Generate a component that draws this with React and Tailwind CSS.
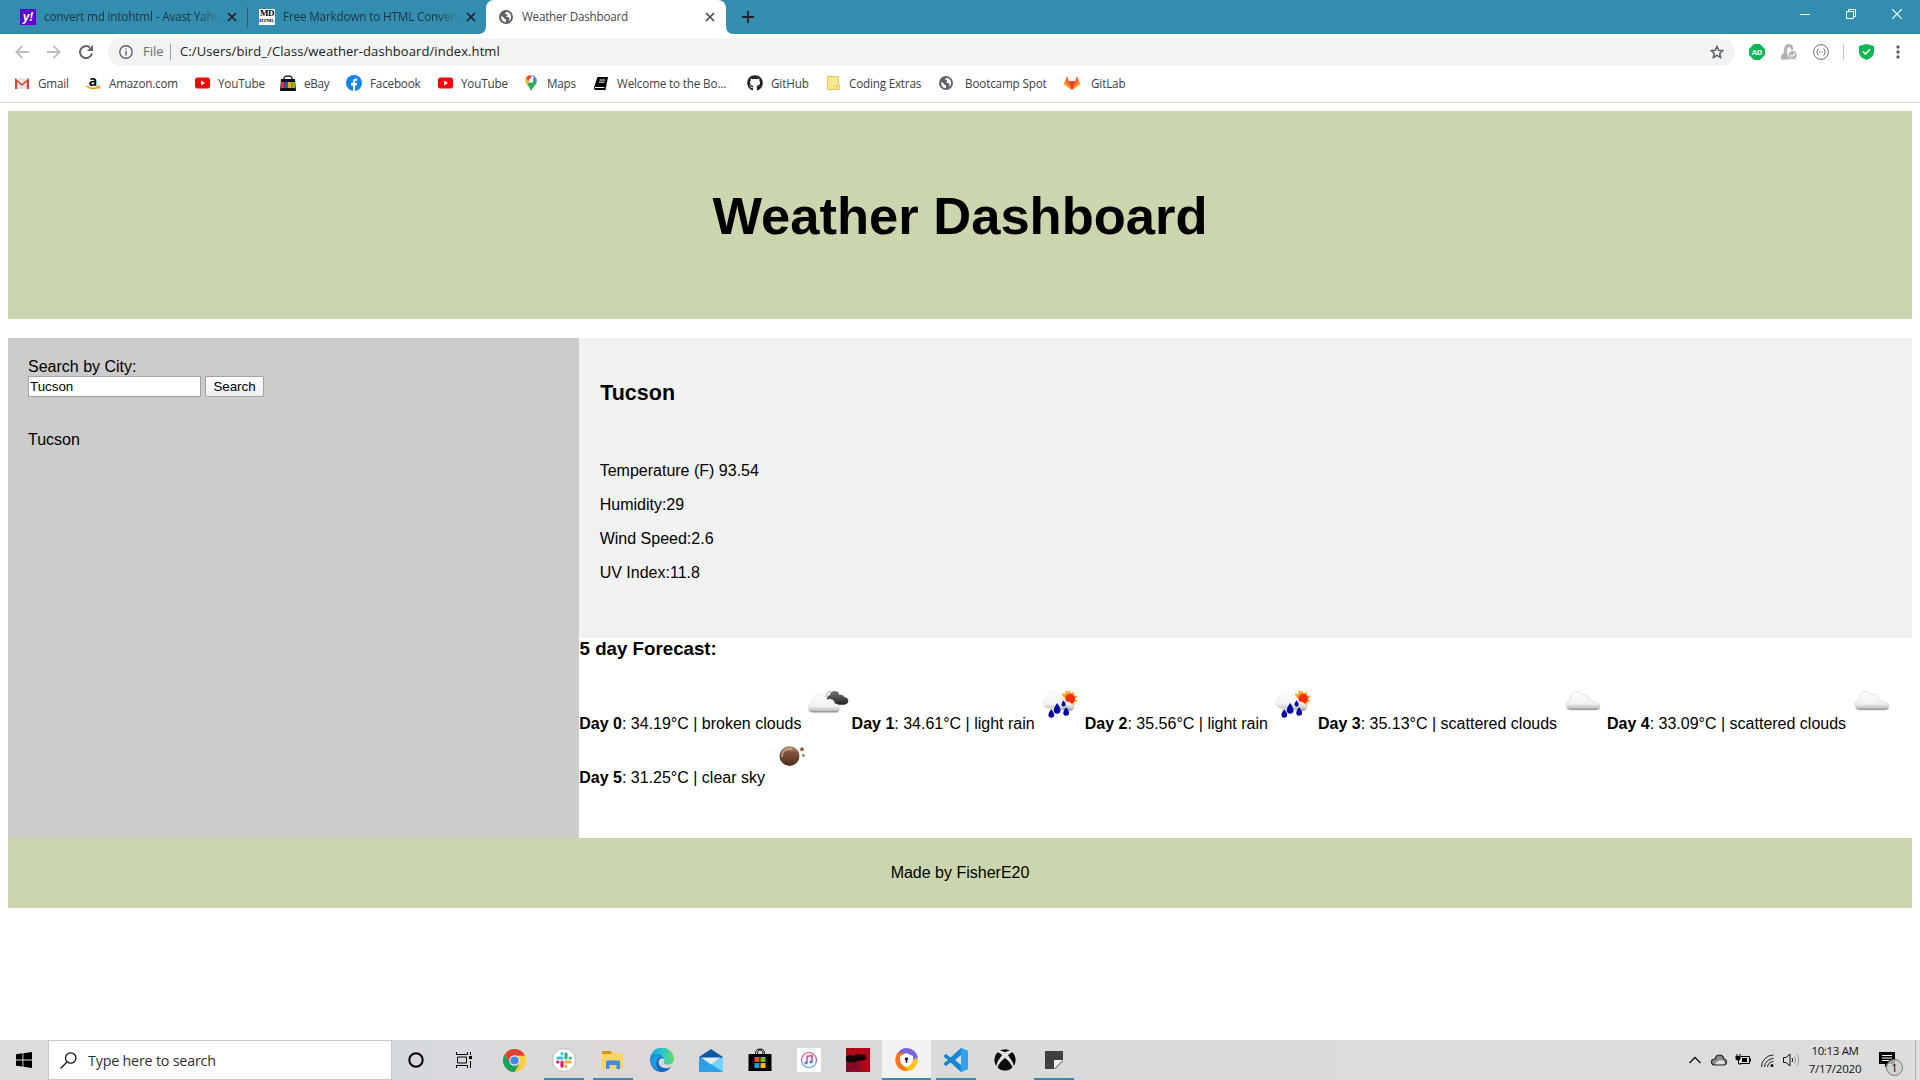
import React from "react";
import { FaGithub, FaXbox } from "react-icons/fa";

const UI = "font-['Open_Sans','Segoe_UI',sans-serif]";

function Globe({ size = 14 }) {
  return (
    <svg width={size} height={size} viewBox="0 0 24 24" fill="#5f6368">
      <circle cx="12" cy="12" r="12" />
      <path d="M4 10c2 2 4 2 5 4s2 2 3 2v5C7 21 3 17 4 10zM13 3c-1 2-3 2-3 4 1 1 4 0 4 2s-2 2-1 3 4 0 5 2-2 4-1 5c3-2 5-6 3-11-2-3-4-5-8-5z" fill="#fff" />
    </svg>
  );
}

function CloseX({ color = "#202124" }) {
  return (
    <svg width="10" height="10" viewBox="0 0 10 10" stroke={color} strokeWidth="1.7">
      <path d="M1 1l8 8M9 1l-8 8" />
    </svg>
  );
}

function TabStrip() {
  return (
    <div className="flex h-[34px] bg-[#338dae] text-[11.7px] text-[#1b3540]">
      <div className="flex w-[248px] items-center pl-5 pb-px">
        <div className="flex h-4 w-4 shrink-0 items-center justify-center bg-[#5f01d1] font-['Liberation_Sans'] text-[12px] leading-none font-bold text-white italic">y!</div>
        <div className="ml-2 w-[176px] overflow-hidden whitespace-nowrap tracking-[-0.15px] [mask-image:linear-gradient(90deg,#000_88%,transparent)]">convert md intohtml - Avast Yahoo</div>
        <div className="ml-[7px]"><CloseX /></div>
        <div className="ml-[10px] h-5 w-px shrink-0 bg-[#235f77]" />
      </div>
      <div className="flex w-[238px] items-center pl-[11px] pb-px">
        <div className="flex h-4 w-4 shrink-0 flex-col items-center bg-white font-['Liberation_Serif'] font-bold text-black">
          <span className="text-[9px] leading-[9px] tracking-[-0.5px]">MD</span>
          <span className="text-[5px] leading-[6px]">HTML</span>
        </div>
        <div className="ml-2 w-[176px] overflow-hidden whitespace-nowrap tracking-[-0.15px] [mask-image:linear-gradient(90deg,#000_88%,transparent)]">Free Markdown to HTML Converter</div>
        <div className="ml-[7px]"><CloseX /></div>
      </div>
      <div className="relative flex w-[240px] items-center rounded-t-lg bg-white pb-px pl-[13px] text-[#45494d]">
        <svg className="absolute bottom-0 -left-2" width="8" height="8"><path d="M8 0v8H0Q8 8 8 0z" fill="#fff" /></svg>
        <svg className="absolute -right-2 bottom-0" width="8" height="8"><path d="M0 0v8h8Q0 8 0 0z" fill="#fff" /></svg>
        <Globe />
        <div className="ml-[9px] w-[183px] whitespace-nowrap tracking-[-0.23px]">Weather Dashboard</div>
        <CloseX color="#45494d" />
      </div>
      <div className="flex flex-1 items-center pl-4">
        <svg width="12" height="12" viewBox="0 0 12 12" stroke="#202124" strokeWidth="1.8"><path d="M6 0v12M0 6h12" /></svg>
      </div>
      <div className="flex h-7 items-center gap-9 pr-[18px]">
        <svg width="10" height="10" stroke="#fff"><path d="M0 5.5h10" /></svg>
        <svg width="10" height="10" stroke="#fff" fill="none"><path d="M.5 2.5h7v7h-7zM2.5 2.5v-2h7v7h-2" /></svg>
        <svg width="10" height="10" stroke="#fff" strokeWidth="1.2"><path d="M0 0l10 10M10 0L0 10" /></svg>
      </div>
    </div>
  );
}

function Toolbar() {
  return (
    <div className="flex h-9 items-center bg-white pl-[15px]">
      <svg width="14" height="14" viewBox="0 0 14 14" fill="none" stroke="#babcbe" strokeWidth="1.8"><path d="M14 7H1.5M7.5 .8L1.3 7l6.2 6.2" /></svg>
      <svg className="ml-[18px]" width="14" height="14" viewBox="0 0 14 14" fill="none" stroke="#babcbe" strokeWidth="1.8"><path d="M0 7h12.500M6.500 .8L12.700 7l-6.200 6.200" /></svg>
      <svg className="ml-[18px]" width="14" height="14" viewBox="0 0 14 14" fill="none" stroke="#5f6368" strokeWidth="2"><path d="M12.900 8.500A6 6 0 1 1 11 2.600" /><path d="M14 0v6H8z" fill="#5f6368" stroke="none" /></svg>
      <div className="ml-[15px] flex h-7 w-[1627px] items-center rounded-full bg-[#f1f3f4] pl-[11px] pr-[11px] text-[13px]">
        <svg width="14" height="14" viewBox="0 0 14 14" fill="none" stroke="#5f6368" strokeWidth="1.400"><circle cx="7" cy="7" r="6.200" /><path d="M7 6v4.500M7 3.400v1.400" /></svg>
        <span className="ml-[10px] w-[27px] text-[#6b6f73]">File</span>
        <span className="h-4 w-px bg-[#9aa0a6]" />
        <span className="ml-[9px] flex-1 whitespace-nowrap text-[#202124] tracking-[0.09px]">C:/Users/bird_/Class/weather-dashboard/index.html</span>
        <svg width="14" height="14" viewBox="0 0 24 24" fill="none" stroke="#5f6368" strokeWidth="2.600"><path d="M12 2.500l2.900 6.500 7 .7-5.300 4.700 1.600 7L12 17.700 5.800 21.400l1.600-7L2.100 9.700l7-.7z" /></svg>
      </div>
      <svg className="ml-[14px]" width="16" height="16" viewBox="0 0 16 16"><path d="M5 0h6l5 5v6l-5 5H5l-5-5V5z" fill="#12b755" /><text x="8" y="10.700" fontSize="7.500" fontWeight="700" fill="#fff" textAnchor="middle" fontFamily="Open Sans">AD</text></svg>
      <svg className="ml-4" width="17" height="16" viewBox="0 0 17 16"><path d="M0 15.500v-3.500q0-1.500 2.500-2.500L3 5q1-5 5-5 3.500 0 4 4l.5 3 3 8.500z" fill="#b2b2b2" /><path d="M5.800 9.500l.3-4q.4-2.500 2-2.500t2 2.500v2.500l-1.500 2z" fill="#fff" /><circle cx="11.700" cy="11" r="4.500" fill="#b2b2b2" stroke="#fff" /><path d="M9.600 11l1.500 1.500 3-3" fill="none" stroke="#fff" strokeWidth="1.200" /></svg>
      <svg className="ml-[15px]" width="16" height="16" viewBox="0 0 16 16" fill="none" stroke="#6c6c6c"><circle cx="8" cy="8" r="7.400" /><path d="M5.700 4.800q-1.300 0-1.200 1.500 0 1.500-1 1.700 1 .2 1 1.700-.1 1.500 1.200 1.500M10.300 4.800q1.300 0 1.200 1.500 0 1.500 1 1.700-1 .2-1 1.700.1 1.500-1.200 1.500M6 8h1M7.500 8h1M9 8h1" /></svg>
      <span className="ml-[14px] h-4 w-px bg-[#c4c6c8]" />
      <svg className="ml-[15px]" width="15" height="16" viewBox="0 0 15 16"><path d="M7.500 0L15 2v6q0 5.500-7.500 8Q0 13.500 0 8V2z" fill="#12b755" /><path d="M4 7.500L6.500 10l4.500-4.700" fill="none" stroke="#fff" strokeWidth="1.500" /></svg>
      <svg className="ml-[22px]" width="4" height="14" fill="#5f6368"><circle cx="2" cy="2" r="1.700" /><circle cx="2" cy="7" r="1.700" /><circle cx="2" cy="12" r="1.700" /></svg>
    </div>
  );
}

const YouTube = () => (
  <svg width="15" height="12" viewBox="0 0 15 12"><rect width="15" height="11" y=".500" rx="2.800" fill="#f00" /><path d="M6 3.600v4.800L10 6z" fill="#fff" /></svg>
);

const bookmarks = [
  { t: "Gmail", w: "w-[71px]", iw: "w-[23px]", ls: "tracking-[-0.2px]", i: <svg width="14" height="12" viewBox="0 0 14 12"><path d="M0 1h14v11H0z" fill="#e8e6e4" /><path d="M0 12V1l7 6 7-6v11h-2.200V4.800L7 9 2.200 4.800V12z" fill="#d94235" /></svg> },
  { t: "Amazon.com", w: "w-[109px]", iw: "w-[23px]", ls: "tracking-[-0.2px]", i: <svg className="overflow-visible" width="15" height="15" viewBox="0 0 15 15"><text x="7" y="9.500" textAnchor="middle" fontSize="14" fontWeight="700" fontFamily="Open Sans">a</text><path d="M.5 10q6 4.500 12 1" fill="none" stroke="#f90" strokeWidth="1.500" /><path d="M11 10h3l-1 3" fill="none" stroke="#f90" /></svg> },
  { t: "YouTube", w: "w-[85px]", iw: "w-[23px]", ls: "tracking-[-0.17px]", i: <YouTube /> },
  { t: "eBay", w: "w-[66px]", iw: "w-[24px]", ls: "tracking-[-0.3px]", i: <svg width="16" height="16" viewBox="0 0 16 16"><path d="M4 5V3q0-2 4-2t4 2v2" fill="none" stroke="#222" strokeWidth="1.300" /><path d="M1 4h14l1 12H0z" fill="#111" /><path d="M1 7h3.500v6H1z" fill="#e5323e" /><path d="M4.500 7H8v6H4.500z" fill="#0063d1" /><path d="M8 7h3.500v6H8z" fill="#f4ae01" /><path d="M11.500 7H15v6h-3.500z" fill="#85b716" /></svg> },
  { t: "Facebook", w: "w-[92px]", iw: "w-[24px]", ls: "tracking-[-0.2px]", i: <svg width="16" height="16" viewBox="0 0 16 16"><circle cx="8" cy="8" r="8" fill="#1185f7" /><path d="M7 16v-5.500H5V8h2V6.300Q7 3.500 9.700 3.500h1.500v2.200H10q-1 0-1 1.100V8h2.200l-.4 2.500H9V16z" fill="#fff" /></svg> },
  { t: "YouTube", w: "w-[87px]", iw: "w-[23px]", ls: "tracking-[-0.17px]", i: <YouTube /> },
  { t: "Maps", w: "w-[69px]", iw: "w-[22px]", ls: "tracking-[-0.2px]", i: <svg width="12" height="16" viewBox="0 0 12 16"><path d="M6 16Q5.300 12 2 9.500L9 3l3 3q0 2-2 4.500Q7 13.500 6 16z" fill="#34a853" /><path d="M.8 8Q-.5 5 1 2.500L5 6 2 9.500z" fill="#fbbc04" /><path d="M1 2.500Q3 0 6 0L6.500 4 4 7z" fill="#ea4335" /><path d="M6 0q4.500 0 6 5.500L7 7l2-4.500z" fill="#4285f4" /><circle cx="6" cy="5.500" r="2.200" fill="#fff" /></svg> },
  { t: "Welcome to the Bo...", w: "w-[153px]", iw: "w-[23px]", ls: "tracking-[-0.16px]", i: <svg width="14" height="13" viewBox="0 0 14 13"><path d="M3.500 0H14l-2.500 13H1Q-.5 12 .5 9z" fill="#000" /><path d="M5.500 3h5.500M5 5.200h5.500M1 10.500h9.500" stroke="#fff" /></svg> },
  { t: "GitHub", w: "w-[80px]", iw: "w-[24px]", ls: "tracking-[-0.15px]", i: <FaGithub size={16} color="#1f2328" /> },
  { t: "Coding Extras", w: "w-[112px]", iw: "w-[22px]", ls: "tracking-[-0.2px]", i: <svg width="13" height="14" viewBox="0 0 13 14"><path d="M.5 .5h11v8l1 1v4H.5z" fill="#ffe694" stroke="#ebc850" /><path d="M9.500 13.500v-4h3" fill="none" stroke="#ebc850" /></svg> },
  { t: "Bootcamp Spot", w: "w-[125px]", iw: "w-[26px]", ls: "tracking-[-0.16px]", i: <Globe /> },
  { t: "GitLab", w: "w-[80px]", iw: "w-[27px]", ls: "tracking-[-0.15px]", i: <svg width="16" height="14" viewBox="0 0 16 14"><path d="M8 14L0 8.200 2.800 0l2.400 5.200h5.600L13.200 0 16 8.200z" fill="#fc6d26" /><path d="M5.200 5.200h5.600L8 14z" fill="#e24329" /><path d="M0 8.200L1 5.200 8 14zM16 8.200l-1-3L8 14z" fill="#fca326" /></svg> },
];

function Bookmarks() {
  return (
    <div className="flex h-[33px] items-center border-b border-[#d5d7d9] bg-white pb-[5px] pl-[15px] text-[11.7px] text-[#3c4043]">
      {bookmarks.map((b, n) => (
        <div key={n} className={`flex shrink-0 items-center ${b.w}`}>
          <span className={`flex shrink-0 items-center ${b.iw}`}>{b.i}</span>
          <span className={`whitespace-nowrap ${b.ls}`}>{b.t}</span>
        </div>
      ))}
    </div>
  );
}

function Defs() {
  return (
    <svg className="absolute h-0 w-0">
      <defs>
        <linearGradient id="cl" x1="0" y1="0" x2="0" y2="1"><stop offset="0" stopColor="#fff" /><stop offset=".65" stopColor="#f2f2f2" /><stop offset=".88" stopColor="#c4c4c4" /><stop offset="1" stopColor="#777" /></linearGradient>
        <linearGradient id="dk" x1="0" y1="0" x2="0" y2="1"><stop offset="0" stopColor="#777" /><stop offset="1" stopColor="#222" /></linearGradient>
        <linearGradient id="mo" x1="0" y1="0" x2="0" y2="1"><stop offset="0" stopColor="#c49a80" /><stop offset=".35" stopColor="#7b5037" /><stop offset="1" stopColor="#4a2e1e" /></linearGradient>
        <linearGradient id="ed" x1="0" y1="0" x2="1" y2="0"><stop offset="0" stopColor="#1b9de2" /><stop offset=".5" stopColor="#2cc3d5" /><stop offset="1" stopColor="#5fe05a" /></linearGradient>
        <linearGradient id="it" x1="0" y1="0" x2="0" y2="1"><stop offset="0" stopColor="#fb4c6c" /><stop offset=".5" stopColor="#b659d8" /><stop offset="1" stopColor="#3da9f5" /></linearGradient>
      </defs>
    </svg>
  );
}

const Broken = () => (
  <g transform="translate(.3 .3) scale(.98)">
    <path d="M25 21q0-4 3-5 1-4 5-4 4 0 5 4 3-1 5 2 4 1 4 4t-4 4H32q-3-4-7-5z" fill="url(#dk)" />
    <path d="M24 18q1-5 5-6" fill="none" stroke="#999" />
    <path d="M11 34q-5 0-5-5 0-4 4-5 0-8 7-9 6 0 8 6 3-2 6 0 2 1 2 4 5 0 5 5 0 4-4 4z" fill="url(#cl)" stroke="#ddd" strokeWidth=".5" />
  </g>
);
const Rain = () => (
  <g transform="translate(.3 .8) scale(.97)">
    <path d="M35 10.500l1.500 4 3.500-2.500-.5 4.500 4.500.2-3.500 3 3.500 2.500-4.500 1 1 4-4-2-6-6-4-5 4.500.5.500-4.500 2.500 3z" fill="#ffa31a" />
    <circle cx="36" cy="19.500" r="5" fill="#fb2c10" />
    <path d="M12 29q-4-1-4-5 0-4 3-5 1-6 7-7 5 0 7 5 4 1 4 5l1 1q6-1 7 2 4 1 3 4-1 3-5 3z" fill="url(#cl)" stroke="#ddd" strokeWidth=".5" />
    <path d="M22.500 24q-3.500 5-3.500 7.500a3.500 3.500 0 0 0 7 0q0-2.500-3.500-7.500zM29 21q-2 3-2 4.500a2.200 2.200 0 0 0 4.400 0q0-1.500-2.400-4.500zM16.500 30q-3 4-3 6a3 3 0 0 0 6 0q0-2-3-6zM31.800 28q-3 4-3 6a3 3 0 0 0 6 0q0-2-3-6z" fill="#0808a0" />
  </g>
);
const Scattered = () => (
  <path transform="translate(0 .6)" d="M14 30.500q-5 0-5-5 0-4 4-5 0-7 6-8.500 5 0 7 3 5-1 6 3 1 4 5 4 6 1 6 5 0 3.500-4 3.500z" fill="url(#cl)" stroke="#d0d0d0" strokeWidth=".6" />
);
const Moon = () => (
  <>
    <circle cx="24.500" cy="23" r="10" fill="url(#mo)" />
    <path d="M17 24q0-9 10-8" fill="none" stroke="#dcc4b4" strokeWidth="1.500" opacity=".7" />
    <path d="M37 13.500l.8 1.700 1.900.2-1.400 1.300.4 1.800-1.700-1-1.700 1 .4-1.800-1.400-1.300 1.900-.2zM38.500 20.500l.5 1.200h1.300l-1 1 .3 1.300-1.100-.7-1.200.7.300-1.300-1-1H38z" fill="#7a5038" />
  </>
);

const days = [
  ["Day 0", ": 34.19°C | broken clouds", Broken, "w-[272.400px]"],
  ["Day 1", ": 34.61°C | light rain", Rain, "w-[233.200px]"],
  ["Day 2", ": 35.56°C | light rain", Rain, "w-[233.200px]"],
  ["Day 3", ": 35.13°C | scattered clouds", Scattered, "w-[289px]"],
  ["Day 4", ": 33.09°C | scattered clouds", Scattered, "w-[289px]"],
  ["Day 5", ": 31.25°C | clear sky", Moon, "w-[236px]"],
];

function Page() {
  return (
    <div className="h-[937px] bg-white px-2 pt-2 font-['Liberation_Sans',Arial,sans-serif] text-[16px] leading-[18px] text-black">
      <header className="flex h-[208px] items-center justify-center bg-[#ccd6ae] pt-px">
        <h1 className="text-[52.5px] leading-[60px] font-bold">Weather Dashboard</h1>
      </header>
      <div className="mt-[19px] flex h-[500px]">
        <aside className="w-[571.200px] bg-[#ccc] px-5 pt-5">
          <p>Search by City:</p>
          <div className="flex items-center gap-1">
            <input className="h-[21px] w-[173px] border border-[#a3a3a3] bg-white px-px text-[13.333px]" defaultValue="Tucson" />
            <button className="h-[21px] w-[59px] rounded-[2px] border border-[#a3a3a3] bg-linear-to-b from-white to-[#efefef] text-[13.333px] leading-[17px]">Search</button>
          </div>
          <p className="mt-[34px]">Tucson</p>
        </aside>
        <main className="flex-1">
          <section className="h-[300px] bg-[#f1f1f1] px-[21px] pt-[43px]">
            <h2 className="text-[21.500px] leading-6 font-bold">Tucson</h2>
            <div className="mt-[57px] -ml-[.500px] flex flex-col gap-4">
              <p>Temperature (F) 93.54</p>
              <p>Humidity:29</p>
              <p>Wind Speed:2.6</p>
              <p>UV Index:11.8</p>
            </div>
          </section>
          <h3 className="pl-[.400px] text-[18.720px] leading-[22px] font-bold">5 day Forecast:</h3>
          <div className="mt-[19px] flex flex-wrap">
            {days.map(([d, t, Icon, w]) => (
              <div key={d} className={`flex h-[54px] items-start justify-between whitespace-nowrap ${w}`}>
                <p className="mt-9 -mr-4"><b>{d}</b>{t}</p>
                <svg className="shrink-0" width="50" height="50" viewBox="0 0 50 50"><Icon /></svg>
              </div>
            ))}
          </div>
        </main>
      </div>
      <footer className="flex h-[70px] items-center justify-center bg-[#ccd6ae]">Made by FisherE20</footer>
    </div>
  );
}

const apps = [
  { i: <svg width="24" height="24" viewBox="0 0 24 24"><circle cx="12" cy="12" r="11.500" fill="#fff" stroke="#aaa" strokeWidth=".8" /><g strokeWidth="3.200" strokeLinecap="round"><path d="M10 5.700v.1M5.800 10h4.200" stroke="#36c5f0" /><path d="M14 5.800V10M18.200 10h.1" stroke="#2eb67d" /><path d="M10 14v4.200M5.700 14h.1" stroke="#e01e5a" /><path d="M14 14h4.200M14 18.200v.1" stroke="#ecb22e" /></g></svg>, u: true },
  { i: <svg width="22" height="20" viewBox="0 0 22 20"><path d="M0 2q0-1 1-1h8l2 2h10v16H0z" fill="#fcd462" /><path d="M0 1h8.500l1.500 2-1 1H0z" fill="#d9960a" /><path d="M4 19v-7q0-1.500 1.500-1.500h11Q18 10.500 18 12v7h-3.500v-4h-7v4z" fill="#3d8fdd" /></svg>, u: true },
  { i: <svg width="24" height="24" viewBox="0 0 24 24"><path d="M0 12A12 12 0 0 1 24 11q0 5.500-6 5.500-4.500 0-4-2 1.500-2.500-1-4.500-4-3-9-1-3 1-4 3z" fill="url(#ed)" /><path d="M0 12q1-5 7-5.500 5 0 7 4-3-1-4.500 1-2 3 .5 6.500 4 4 11 1-4 5.500-10 5Q1 23 0 12z" fill="#1567c0" /><path d="M8 10.500q-4 6 1 12Q1 21 .500 12 2 7 8 7q4 .5 6 3-3.500-2-6 .5z" fill="#1e9ade" /></svg> },
  { i: <svg width="24" height="23" viewBox="0 0 24 23"><path d="M0 8l12-8 12 8-12 9z" fill="#0c59a4" /><path d="M0 8v15h24V8l-12 7z" fill="#28a8ea" /><path d="M0 8l24 15H0z" fill="#2f9fe8" /><path d="M24 8v15L12 15z" fill="#74d3fb" /><path d="M2 8.500h20L12 15.500z" fill="#e4edf4" /></svg> },
  { i: <svg width="24" height="24" viewBox="0 0 24 24"><path d="M7.500 7V5.500Q7.500 1 12 1t4.500 4.500V7M9.500 7q0-5 2.500-5 3 0 3 5" fill="none" stroke="#000" /><path d="M.5 6h23v17h-23z" fill="#000" /><path d="M6.500 9h5v5h-5z" fill="#f25022" /><path d="M12.500 9h5v5h-5z" fill="#7fba00" /><path d="M6.500 15h5v5h-5z" fill="#00a4ef" /><path d="M12.500 15h5v5h-5z" fill="#ffb900" /></svg> },
  { i: <svg width="24" height="24" viewBox="0 0 24 24"><path d="M0 0h24v24H0z" fill="#fff" /><g fill="none" stroke="url(#it)"><circle cx="12" cy="12" r="7.500" strokeWidth="1.200" /><path d="M10 15V8.500l5-1V14" strokeWidth="1.700" /></g><ellipse cx="9" cy="15" rx="1.600" ry="1.400" fill="#6b6be8" /><ellipse cx="14" cy="14" rx="1.600" ry="1.400" fill="#6b6be8" /></svg> },
  { i: <svg width="24" height="24" viewBox="0 0 24 24"><path d="M0 0h24v24H0z" fill="#b10719" /><path d="M0 13q8-2 13 1l3 10H0z" fill="#8e0a26" /><path d="M0 8l4-1 4 1 3-2 4 1 3-.5 2 1.500-2 .5 2 1 1 2-2-.5-1 2-2-1-2 1-4 .5-2 1.500-4-1.500L3 15 0 13z" fill="#180508" /><path d="M0 17l5-2 5 3M2 22l5-3 5 3" fill="none" stroke="#50081c" strokeWidth=".8" /></svg> },
  { i: <svg width="23" height="24" viewBox="0 0 23 24"><path d="M3 5Q6 0 12 0q9 1 11 10l-7 5-3-8z" fill="#7864dc" /><path d="M23 10q0 8-6 12Q7 26 2 18l12-1 5-6z" fill="#ffc41f" /><path d="M3 4Q-3 13 4 20q5 4 9 2-8-5-8-12l6-4z" fill="#ff7424" /><path d="M11.500 5L18 8v4q0 4-6.500 7Q5 16 5 12V8z" fill="#fff" /><circle cx="11.500" cy="11" r="1.800" fill="#224" /><path d="M10.800 11h1.400v4h-1.400z" fill="#224" /></svg>, u: true, a: true },
  { i: <svg width="24" height="24" viewBox="0 0 24 24"><path d="M17 0l7 3v18l-7 3L6.500 14.500 2 18l-2-1.500V15l4-3-4-3V7.500L2 6l4.500 3.500zM17 7l-6 5 6 5z" fill="#1684ce" fillRule="evenodd" /><path d="M17 0l7 3v18l-7 3z" fill="#2fa4eb" /></svg>, u: true },
  { i: <FaXbox size={22} color="#0b0b0b" className="rounded-full bg-[#e3e3e3]" /> },
  { i: <svg width="18" height="18" viewBox="0 0 18 18"><path d="M0 0h18v10l-8 8H0z" fill="#404040" /><path d="M9 9h9l-9 9z" fill="#f4f4f4" /></svg>, u: true },
];

function Taskbar() {
  return (
    <div className="flex h-10 bg-[linear-gradient(90deg,#dddcda_0%,#d5d8dc_20%,#d8dadd_25%,#dcd8d7_32%,#d9d9db_45%,#dcdbdb_60%,#dedddd_100%)]">
      <div className="flex w-12 items-center justify-center">
        <svg width="16" height="16" viewBox="0 0 16 16"><path d="M0 2.200L6.500 1.300v6.200H0zM7.400 1.200L16 0v7.500H7.400zM0 8.400h6.500v6.200L0 13.700zM7.400 8.400H16V16l-8.600-1.200z" /></svg>
      </div>
      <div className="flex w-[344px] items-center border border-[#c9c9c9] bg-white pl-[11px] text-[14.3px] text-[#303030]">
        <svg width="17" height="17" viewBox="0 0 17 17" fill="none" stroke="#111" strokeWidth="1.300"><circle cx="10.700" cy="6" r="5.200" /><path d="M7 10L.5 16.500" /></svg>
        <span className="mt-px ml-[11px] whitespace-nowrap tracking-[-0.2px]">Type here to search</span>
      </div>
      <div className="flex w-12 items-center justify-center"><svg width="16" height="16"><circle cx="8" cy="8" r="6.700" fill="none" stroke="#000" strokeWidth="2" /></svg></div>
      <div className="flex w-[51px] items-center justify-center">
        <svg className="-ml-[2px]" width="17" height="16" viewBox="0 0 17 16" fill="none" stroke="#000"><path d="M.500 0v2.500h11V0M.500 16v-2.500h11V16M1.500 5h9v6h-9zM14.500 0v3M14.500 9v7" /><path d="M13 4h3v3h-3z" fill="#000" stroke="none" /></svg>
      </div>
      <div className="-ml-px mr-px flex w-12 items-center justify-center">
        <svg width="23" height="23" viewBox="0 0 24 24"><circle cx="12" cy="12" r="12" fill="#ffcd40" /><path d="M1.600 6A12 12 0 0 1 22.400 6L23 7H12l-5 7z" fill="#e24132" /><path d="M1.600 6A12 12 0 0 0 12 24l5-9h-9z" fill="#1aa05a" /><circle cx="12" cy="12" r="5.400" fill="#f4f4f4" /><circle cx="12" cy="12" r="4.300" fill="#4487f4" /></svg>
      </div>
      <div className="flex">
        {apps.map((a, n) => (
          <div key={n} className={`flex w-[49px] flex-col items-center ${a.a ? "bg-[#f2f2f2]" : ""}`}>
            <div className="flex h-[38px] items-center pt-[2px]">{a.i}</div>
            {a.u && <div className={`h-0.5 bg-[#338dae] ${a.a ? "w-[49px]" : "w-10"}`} />}
          </div>
        ))}
      </div>
      <div className="flex flex-1 items-center justify-end">
        <svg className="mr-[10px]" width="12" height="8" fill="none" stroke="#111" strokeWidth="1.300"><path d="M.5 7L6 1.500 11.500 7" /></svg>
        <svg className="mr-2" width="16" height="12" viewBox="0 0 16 12"><path d="M4 11Q.5 11 .5 8T4 5q1-4 4.500-4T13 5q2.500.5 2.500 3T13 11z" fill="#8a8a8a" stroke="#222" strokeWidth="1.200" /><path d="M4 10.300Q6 6 10 6.200T14 10.300z" fill="#ddd" /></svg>
        <svg className="mr-[10px]" width="16" height="12" viewBox="0 0 16 12" fill="none" stroke="#000"><path d="M6 2.500h8.500v7H5M2 0v3M5 0v3M3.500 6v4H6" /><path d="M.500 2h5v3q-2.500 3-5 0zM7 4h5v4H7zM15 4.500h1v3h-1z" fill="#000" stroke="none" /></svg>
        <svg className="mr-[9px]" width="13" height="13" viewBox="0 0 13 13" fill="none" stroke="#222"><path d="M.500 13A12 12 0 0 1 12.500 1M3.500 13A9 9 0 0 1 12.500 4.500M6.500 13a6 6 0 0 1 6-5.500" /><circle cx="11" cy="11.500" r="1.500" fill="#000" stroke="none" /></svg>
        <svg className="mr-[9px]" width="17" height="14" viewBox="0 0 17 14" fill="none" stroke="#111"><path d="M.500 4.500h2.500l4-3.500v12L3 9.500H.500zM9 5q1.500 2 0 4" /><path d="M11.500 3.500q2.500 3.500 0 7M14 1.500q3.500 5.500 0 11" stroke="#999" /></svg>
        <div className="w-[52px] text-center text-[11.5px] leading-[18px] whitespace-nowrap text-[#111]">
          <div className="-mx-2 tracking-[-0.35px]">10:13 AM</div>
          <div className="-mx-2 tracking-[-0.22px]">7/17/2020</div>
        </div>
        <div className="relative ml-[18px] h-4 w-4">
          <svg width="16" height="16" viewBox="0 0 16 16"><path d="M0 0h16v12H9l-3 3.500V12H0z" /><path d="M3 3.500h10M3 6h10M3 8.500h7" stroke="#fff" /></svg>
          <div className="absolute top-[7px] left-[7px] flex h-[17px] w-[17px] items-center justify-center rounded-full border border-[#777] bg-[#d0d0d0]/80 text-[11px] leading-none text-black">1</div>
        </div>
        <div className="ml-5 h-10 w-px bg-[#aaa]" />
        <div className="w-1" />
      </div>
    </div>
  );
}

export default function App() {
  return (
    <div className={`flex h-[1080px] w-[1920px] flex-col overflow-hidden bg-white ${UI}`}>
      <Defs />
      <TabStrip />
      <Toolbar />
      <Bookmarks />
      <Page />
      <Taskbar />
    </div>
  );
}
